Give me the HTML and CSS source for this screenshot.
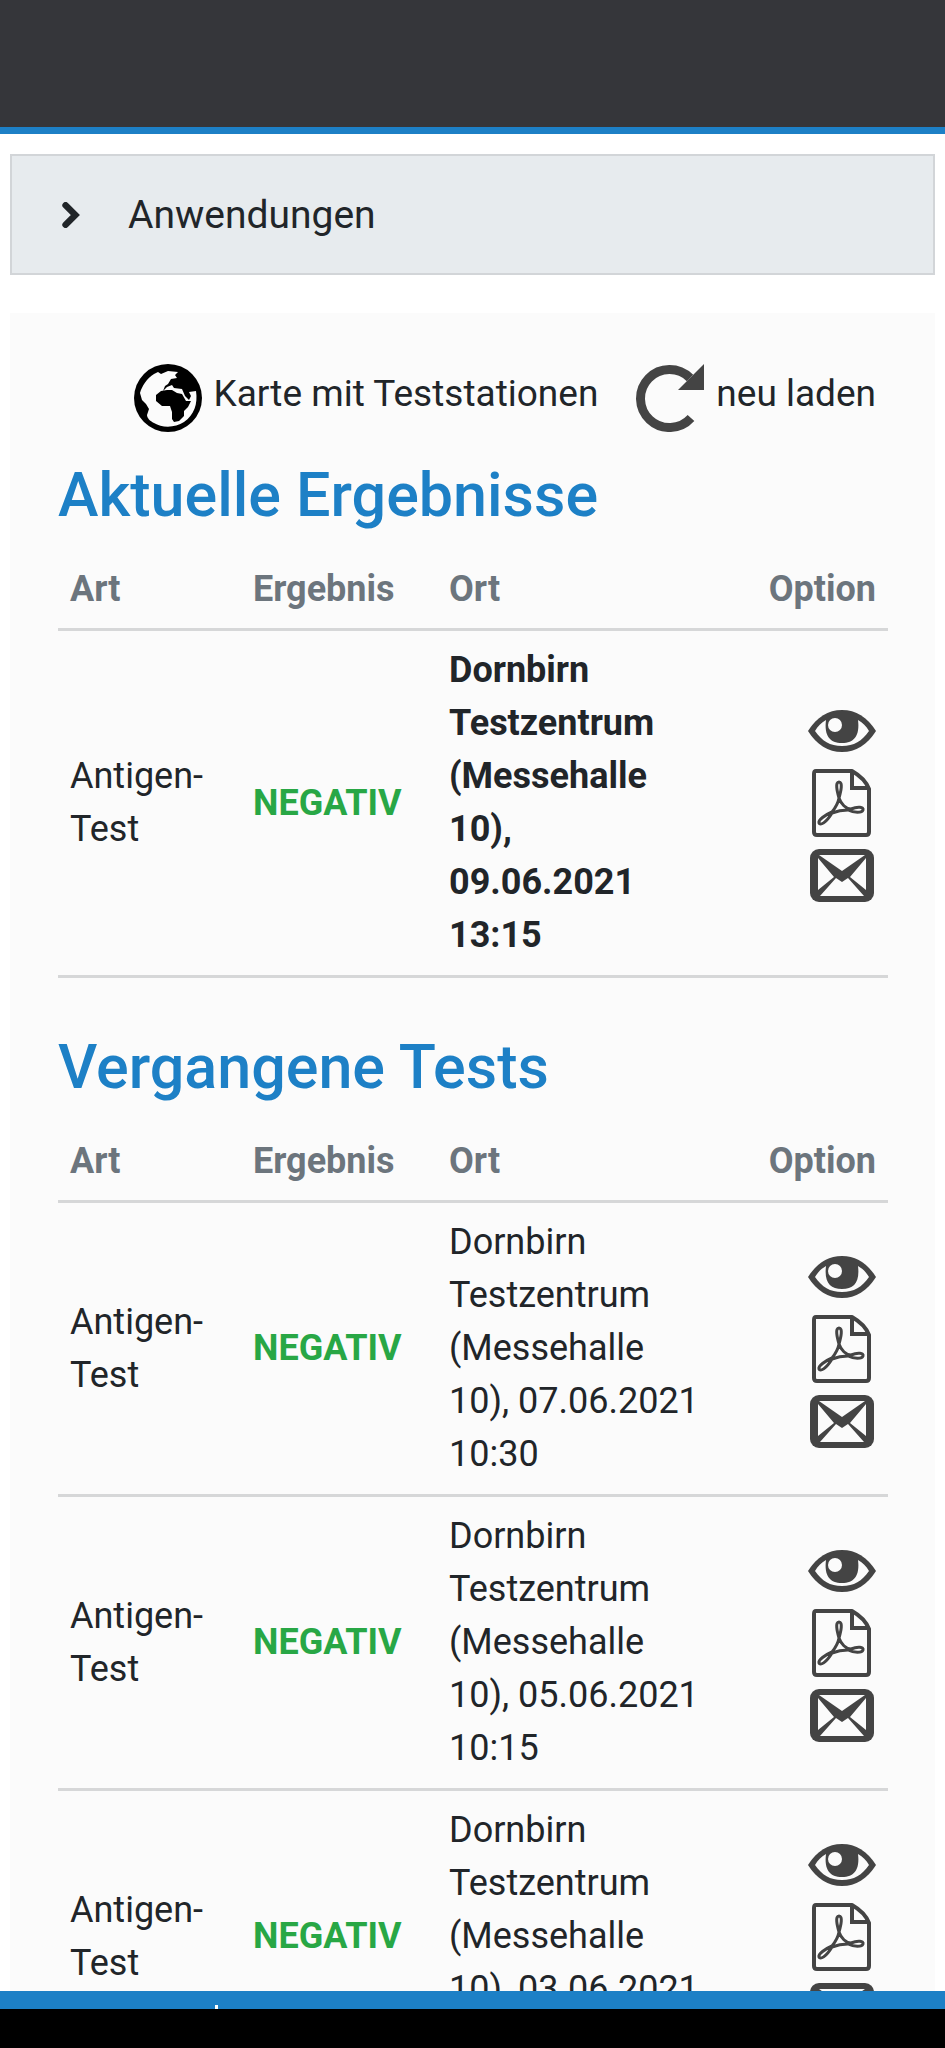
FILE: index.html
```html
<!DOCTYPE html>
<html lang="de">
<head>
  <meta charset="UTF-8" />
  <meta name="viewport" content="width=device-width, initial-scale=1" />
  <title>Testergebnisse</title>
  <link rel="stylesheet" href="styles.css">
</head>
<body>

  <!-- icons shared by all rows -->
  <svg class="sprite" aria-hidden="true">
    <symbol id="icon-eye" viewBox="0 0 68 68">
      <path fill="#444" d="M0 34C9 20 20 13 34 13s25 7 34 21C59 48 48 55 34 55S9 48 0 34z"/>
      <path fill="#fbfbfb" d="M7 34C10 29 13 26 18 23C16 39 22 46 34 46S52 39 50 23C55 26 58 29 61 34C54 44 46 49 34 49S14 44 7 34z"/>
      <circle fill="#fbfbfb" cx="27" cy="28" r="7"/>
    </symbol>
    <symbol id="icon-pdf" viewBox="0 0 68 68">
      <g fill="none" stroke="#444" stroke-linejoin="round">
        <path stroke-width="4" d="M8 2H44C51 6 58 12 61 20V63Q61 66 58 66H9Q6 66 6 63V5Q6 2 8 2z"/>
        <path stroke-width="4" stroke-linejoin="miter" d="M44 3V19H60"/>
        <path stroke-width="3" d="M31 29C29 22 27 13 31 13S33 22 31 29C33 35 38 40 43 40C50 37 56 38 55 41S46 44 40 41C34 41 29 42 24 44C18 54 12 57 11 54S17 46 24 43C28 38 30 35 31 29z"/>
      </g>
    </symbol>
    <symbol id="icon-mail" viewBox="0 0 68 68">
      <rect fill="#444" x="2" y="8" width="64" height="53" rx="9"/>
      <path fill="#fbfbfb" d="M11 14H57L34 30z"/>
      <path fill="#fbfbfb" d="M10 17L26 36L10 49zM58 17L42 36L58 49z"/>
      <path fill="#fbfbfb" d="M12 55L28 37L34 41L40 37L56 55z"/>
    </symbol>
  </svg>

  <header class="topbar"></header>

  <main class="page">
    <button class="menu-toggle" type="button">
      <svg viewBox="0 0 16 24" aria-hidden="true"><path d="M3 3L12 12L3 21"/></svg>
      Anwendungen
    </button>

    <div class="content">
      <div class="actions">
        <a href="#">
          <svg class="icon" viewBox="0 0 68 68" aria-hidden="true">
            <circle cx="34" cy="34" r="34"/>
            <path fill="#fbfbfb" d="M20 10L24 8L27 10L34 7L44 8L41 11L43 14L37 15L34 20L31 22L29 27L33 23L38 21L40 24L48 25L51 32L55 36L57 32L55 28L62 27C64 40 60 51 50 58C41 64 28 64 20 59C16 57 13 54 13 51L15 45L12 40L8 36L6 29C8 22 13 14 20 10z"/>
            <path d="M22 31L27 27L33 26L38 26L43 29L48 30L52 37L57 37L54 43L50 47L50 52L45 57L40 58L38 55L38 48L36 42L28 42L22 37z"/>
          </svg>
          <span>Karte mit Teststationen</span>
        </a>
        <a href="#">
          <svg class="icon" viewBox="0 0 68 68" aria-hidden="true">
            <path fill="none" stroke="#444" stroke-width="9" d="M55 54A29 29 0 1 1 54 14"/>
            <path fill="#444" d="M68 0V26H42z"/>
          </svg>
          <span>neu laden</span>
        </a>
      </div>

      <h1>Aktuelle Ergebnisse</h1>
      <table class="results current">
        <thead>
          <tr><th class="type">Art</th><th class="result">Ergebnis</th><th class="place">Ort</th><th class="option">Option</th></tr>
        </thead>
        <tbody>
          <tr>
            <td>Antigen-Test</td>
            <td class="negative">NEGATIV</td>
            <td class="place">Dornbirn Testzentrum (Messehalle 10), 09.06.2021 13:15</td>
            <td class="option">
              <a href="#"><svg class="icon"><use href="#icon-eye"/></svg></a>
              <a href="#"><svg class="icon"><use href="#icon-pdf"/></svg></a>
              <a href="#"><svg class="icon"><use href="#icon-mail"/></svg></a>
            </td>
          </tr>
        </tbody>
      </table>

      <h1>Vergangene Tests</h1>
      <table class="results">
        <thead>
          <tr><th class="type">Art</th><th class="result">Ergebnis</th><th class="place">Ort</th><th class="option">Option</th></tr>
        </thead>
        <tbody>
          <tr>
            <td>Antigen-Test</td>
            <td class="negative">NEGATIV</td>
            <td class="place">Dornbirn Testzentrum (Messehalle 10), 07.06.2021 10:30</td>
            <td class="option">
              <a href="#"><svg class="icon"><use href="#icon-eye"/></svg></a>
              <a href="#"><svg class="icon"><use href="#icon-pdf"/></svg></a>
              <a href="#"><svg class="icon"><use href="#icon-mail"/></svg></a>
            </td>
          </tr>
          <tr>
            <td>Antigen-Test</td>
            <td class="negative">NEGATIV</td>
            <td class="place">Dornbirn Testzentrum (Messehalle 10), 05.06.2021 10:15</td>
            <td class="option">
              <a href="#"><svg class="icon"><use href="#icon-eye"/></svg></a>
              <a href="#"><svg class="icon"><use href="#icon-pdf"/></svg></a>
              <a href="#"><svg class="icon"><use href="#icon-mail"/></svg></a>
            </td>
          </tr>
          <tr>
            <td>Antigen-Test</td>
            <td class="negative">NEGATIV</td>
            <td class="place">Dornbirn Testzentrum (Messehalle 10), 03.06.2021</td>
            <td class="option">
              <a href="#"><svg class="icon"><use href="#icon-eye"/></svg></a>
              <a href="#"><svg class="icon"><use href="#icon-pdf"/></svg></a>
              <a href="#"><svg class="icon"><use href="#icon-mail"/></svg></a>
            </td>
          </tr>
        </tbody>
      </table>
    </div>
  </main>

  <footer class="bottombar"><span class="tick"></span></footer>

</body>
</html>
```

FILE: styles.css
```css
* {
  box-sizing: border-box;
}

body {
  font-family: Roboto, sans-serif;
  font-size: 36px;
  line-height: 53px;
  color: #212529;
  margin: 0;
  height: 100vh;
  display: flex;
  flex-direction: column;
  background: #fff;
}

a {
  color: inherit;
  text-decoration: none;
}

.sprite {
  display: none;
}

.topbar {
  flex: none;
  height: 134px;
  background: #35363a;
  border-bottom: 7px solid #1d80c6;
}

.page {
  flex: 1;
  min-height: 0;
  overflow: hidden;
  padding: 20px 10px 0;
}

.menu-toggle {
  display: flex;
  align-items: center;
  gap: 48px;
  width: 100%;
  height: 121px;
  padding: 0 50px;
  border: 2px solid #d2d5d8;
  background: #e7ebee;
  color: #212529;
  font-family: inherit;
  font-size: 39px;
  cursor: pointer;
}

.menu-toggle svg {
  width: 18px;
  height: 26px;
  fill: none;
  stroke: #212529;
  stroke-width: 6;
  stroke-linecap: round;
}

.content {
  margin-top: 38px;
  padding: 51px 47px 0 48px;
  background: #fbfbfb;
}

.actions {
  display: flex;
  justify-content: flex-end;
  gap: 38px;
  padding-right: 12px;
  font-size: 37px;
  line-height: 60px;
}

.actions a {
  display: flex;
  gap: 12px;
}

.icon {
  display: block;
  width: 68px;
  height: 68px;
}

h1 {
  margin: 27px 0 20px;
  font-size: 61px;
  line-height: 72px;
  font-weight: 500;
  color: #1d80c6;
}

.results {
  width: 100%;
  table-layout: fixed;
  border-collapse: collapse;
}

.results.current {
  margin-bottom: 53px;
}

.results th,
.results td {
  padding: 12px;
  text-align: left;
  border-bottom: 3px solid #d6d7d8;
}

.results td {
  padding: 13px 12px;
}

.results th {
  color: #6c757d;
  font-weight: 700;
}

.results tbody tr {
  height: 294px;
}

.results .type {
  width: 183px;
}

.results .result {
  width: 196px;
}

.results .place {
  width: 275px;
  vertical-align: top;
}

.results.current td.place {
  font-weight: 700;
}

.results .negative {
  color: #28a745;
  font-weight: 700;
}

.results .option {
  text-align: right;
}

.option .icon {
  margin: 0 0 4px auto;
}

.option a:last-child .icon {
  margin-bottom: 0;
}

.bottombar {
  flex: none;
  height: 57px;
  padding: 14px 215px 0;
  background: #1d80c6;
  border-bottom: 39px solid #000;
}

.tick {
  display: block;
  width: 3px;
  height: 4px;
  background: #fff;
}
```
